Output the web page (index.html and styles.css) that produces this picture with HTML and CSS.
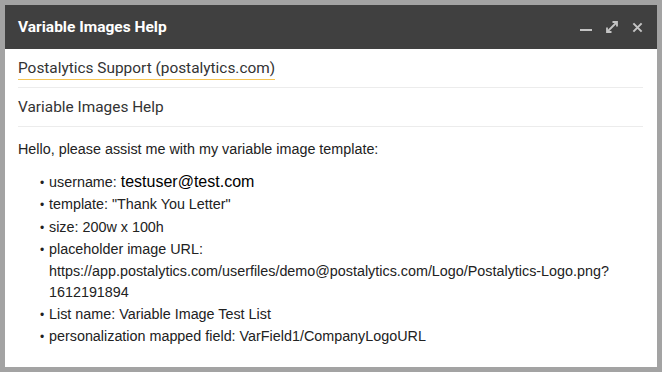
FILE: index.html
```html
<!DOCTYPE html>
<html>
  <head>
    <title>Variable Images Help</title>
    <meta charset="utf-8">
    <link rel="stylesheet" href="styles.css">
  </head>
  <body>
    <div class="window">
      <div class="titlebar">
        <span class="title">Variable Images Help</span>
        <div class="controls">
          <svg class="ctl" width="12" height="12" viewBox="0 0 12 12"><rect x="0" y="8" width="12" height="2" fill="#c4c4c4"/></svg>
          <svg class="ctl" width="12" height="12" viewBox="0 0 12 12"><path d="M1.5 10.5 L10.5 1.5 M6.5 1 H11 V5.5 M1 6.5 V11 H5.5" stroke="#c4c4c4" stroke-width="1.8" fill="none"/></svg>
          <svg class="ctl" width="11" height="11" viewBox="0 0 12 12"><path d="M1.5 1.5 L10.5 10.5 M10.5 1.5 L1.5 10.5" stroke="#c4c4c4" stroke-width="2.2" fill="none"/></svg>
        </div>
      </div>
      <div class="content">
        <div class="row"><span class="from">Postalytics Support (postalytics.com)</span></div>
        <div class="row">Variable Images Help</div>
        <div class="message">
          <p>Hello, please assist me with my variable image template:</p>
          <ul>
            <li>username: <span class="user">testuser@test.com</span></li>
            <li>template: "Thank You Letter"</li>
            <li>size: 200w x 100h</li>
            <li>placeholder image URL: https://app.postalytics.com/userfiles/demo@postalytics.com/Logo/Postalytics-Logo.png?1612191894</li>
            <li>List name: Variable Image Test List</li>
            <li>personalization mapped field: VarField1/CompanyLogoURL</li>
          </ul>
        </div>
      </div>
    </div>
  </body>
</html>
```

FILE: styles.css
```css
html, body {
  margin: 0;
  padding: 0;
}

body {
  background-color: #a3a3a3;
  padding: 5px 5px 5px 5px;
  height: 372px;
  box-sizing: border-box;
}

.window {
  width: 652px;
  height: 362px;
  background-color: white;
}

.titlebar {
  display: flex;
  align-items: center;
  height: 44px;
  padding: 0 14px 0 13px;
  background-color: #404040;
}

.title {
  flex: 1;
  color: white;
  font: bold 15.5px Roboto, sans-serif;
}

.controls {
  display: flex;
  gap: 14px;
  align-items: center;
}

.content {
  padding: 0 14px 0 13px;
}

.row {
  display: flex;
  align-items: center;
  height: 38px;
  border-bottom: 1px solid #ececec;
  font: 15.4px Roboto, sans-serif;
  color: #333;
}

.from {
  border-bottom: 1px solid #f5c453;
  padding-bottom: 2px;
  margin-top: 2px;
}

.message {
  font: 14.35px "Liberation Sans", Arial, sans-serif;
  color: #222;
  padding-top: 12px;
}

.message p {
  margin: 0 0 11px;
  line-height: 21px;
}

.message ul {
  margin: 0;
  padding-left: 31px;
  line-height: 21.3px;
  list-style: none;
}

.message li::before {
  content: "\2022";
  display: inline-block;
  width: 9px;
  margin-left: -9px;
  font-size: 12px;
}

.user {
  font-size: 16px;
  color: #000;
}
```
